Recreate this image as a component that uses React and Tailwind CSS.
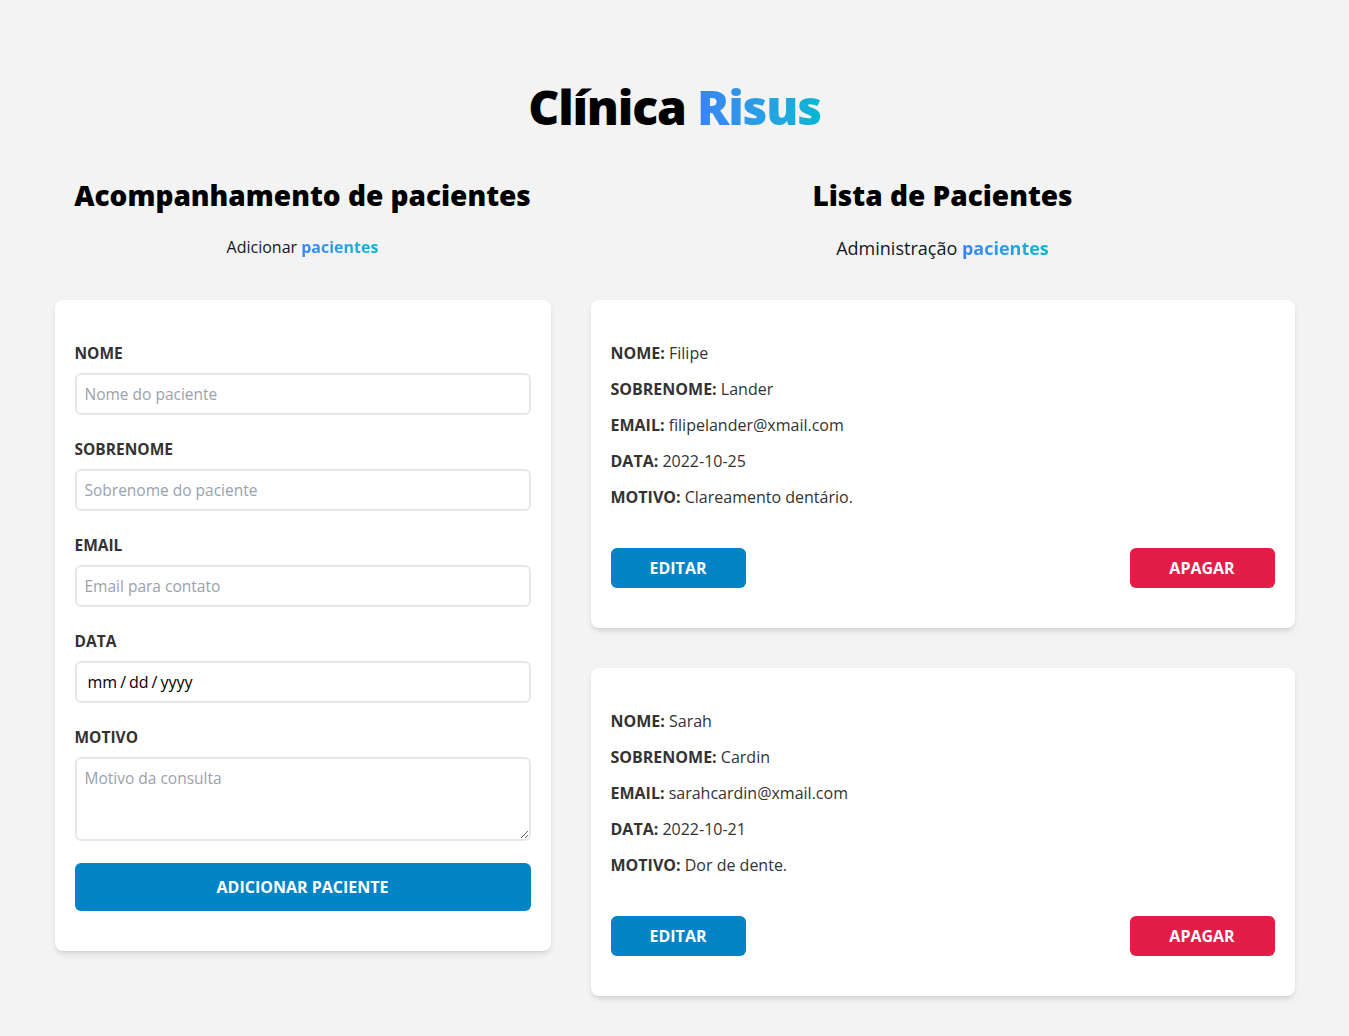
import React, { useState } from 'react';

const initialPatients = [
  { id: 1, nome: 'Filipe', sobrenome: 'Lander', email: 'filipelander@xmail.com', data: '2022-10-25', motivo: 'Clareamento dentário.' },
  { id: 2, nome: 'Sarah', sobrenome: 'Cardin', email: 'sarahcardin@xmail.com', data: '2022-10-21', motivo: 'Dor de dente.' },
];

const fields = [
  { name: 'nome', label: 'Nome', placeholder: 'Nome do paciente', type: 'text' },
  { name: 'sobrenome', label: 'Sobrenome', placeholder: 'Sobrenome do paciente', type: 'text' },
  { name: 'email', label: 'Email', placeholder: 'Email para contato', type: 'email' },
  { name: 'data', label: 'Data', placeholder: '', type: 'date' },
];

const App = () => {
  const [patients, setPatients] = useState(initialPatients);

  const handleDelete = (id) => {
    setPatients(patients.filter((p) => p.id !== id));
  };

  return (
    <div className="min-h-screen bg-[#f3f3f3] font-['Open_Sans',sans-serif] text-gray-900">
      <div className="max-w-7xl mx-auto px-5 pt-[80px] pb-10">
        <h1 className="text-center text-[48px] leading-[54px] font-black tracking-tight text-black">
          Clínica{' '}
          <span className="bg-gradient-to-r from-[#3b82f6] to-[#06b6d4] bg-clip-text text-transparent">Risus</span>
        </h1>

        <div className="flex gap-10 mt-[43px]">
          {/* Formulário */}
          <div className="w-2/5">
            <h2 className="text-center text-[28px] leading-9 font-black text-black">Acompanhamento de pacientes</h2>
            <p className="text-center text-base leading-6 mt-[22px] mb-[41px]">
              Adicionar{' '}
              <span className="font-bold bg-gradient-to-r from-[#3b82f6] to-[#06b6d4] bg-clip-text text-transparent">pacientes</span>
            </p>

            <form className="bg-white rounded-lg shadow-md px-5 pt-[43px] pb-10">
              {fields.map((field) => (
                <div key={field.name} className="mb-6">
                  <label className="block text-[15.5px] leading-5 font-bold uppercase text-[#333] mb-[10px]">
                    {field.label}
                  </label>
                  <input
                    type={field.type}
                    placeholder={field.placeholder}
                    className={`w-full h-[42px] border-2 border-gray-200 rounded-md text-black placeholder:text-gray-400 outline-none [&::-webkit-calendar-picker-indicator]:hidden [&::-webkit-datetime-edit-text]:px-0.5 ${
                      field.type === 'date' ? 'px-2.5 text-base' : 'px-2 text-[15.5px]'
                    }`}
                  />
                </div>
              ))}
              <div className="mb-[22px]">
                <label className="block text-[15.5px] leading-5 font-bold uppercase text-[#333] mb-[10px]">Motivo</label>
                <textarea
                  placeholder="Motivo da consulta"
                  className="w-full h-[84px] border-2 border-gray-200 rounded-md px-2 py-2 text-[15.5px] placeholder:text-gray-400 outline-none block"
                />
              </div>
              <button
                type="button"
                className="w-full h-12 bg-[#0284c7] hover:bg-[#0369a1] text-white font-bold uppercase rounded-md text-base"
              >
                Adicionar paciente
              </button>
            </form>
          </div>

          {/* Lista */}
          <div className="flex-1">
            <h2 className="text-center text-[28px] leading-9 font-black text-black">Lista de Pacientes</h2>
            <p className="text-center text-lg leading-7 mt-[21px] mb-[38px]">
              Administração{' '}
              <span className="font-bold bg-gradient-to-r from-[#3b82f6] to-[#06b6d4] bg-clip-text text-transparent">pacientes</span>
            </p>

            <div className="space-y-10">
              {patients.map((p) => (
                <div key={p.id} className="bg-white rounded-lg shadow-md px-5 pt-[41px] pb-10">
                  <div className="space-y-3 text-base leading-6 text-[#333]">
                    <p><span className="font-bold">NOME:</span> {p.nome}</p>
                    <p><span className="font-bold">SOBRENOME:</span> {p.sobrenome}</p>
                    <p><span className="font-bold">EMAIL:</span> {p.email}</p>
                    <p><span className="font-bold">DATA:</span> {p.data}</p>
                    <p><span className="font-bold">MOTIVO:</span> {p.motivo}</p>
                  </div>
                  <div className="flex justify-between mt-[39px]">
                    <button className="w-[135px] h-10 bg-[#0284c7] hover:bg-[#0369a1] text-white font-bold uppercase rounded-md">
                      Editar
                    </button>
                    <button
                      onClick={() => handleDelete(p.id)}
                      className="w-[145px] h-10 bg-[#e11d48] hover:bg-[#be123c] text-white font-bold uppercase rounded-md"
                    >
                      Apagar
                    </button>
                  </div>
                </div>
              ))}
            </div>
          </div>
        </div>
      </div>
    </div>
  );
};

export default App;
